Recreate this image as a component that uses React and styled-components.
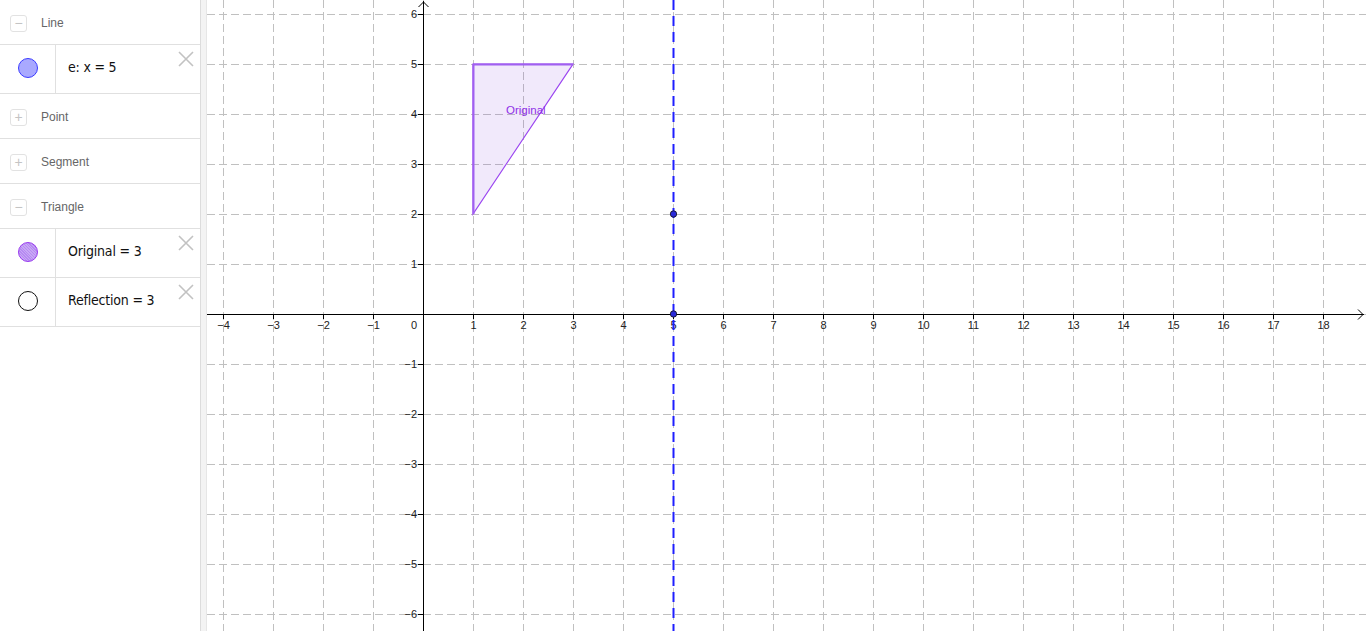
import React from 'react';
import styled, { createGlobalStyle } from 'styled-components';

const Global = createGlobalStyle`
  html, body { margin: 0; padding: 0; background: #fff; overflow: hidden; }
  body { font-family: "Liberation Sans", Arial, sans-serif; }
`;

const Page = styled.div`
  display: flex;
  width: 1366px;
  height: 631px;
  background: #fff;
`;

const AlgebraPanel = styled.div`
  width: 200px;
  flex-shrink: 0;
  display: flex;
  flex-direction: column;
  background: #fff;
`;

const Divider = styled.div`
  width: 5px;
  flex-shrink: 0;
  background: #f3f3f3;
  border-left: 1px solid #dcdcdc;
  border-right: 1px solid #e6e6e6;
`;

const Canvas = styled.div`
  flex: 1;
  position: relative;
  overflow: hidden;
`;

const GroupHeader = styled.div`
  height: 45px;
  box-sizing: border-box;
  padding-top: 2px;
  display: flex;
  align-items: center;
  border-bottom: 1px solid #e0e0e0;
  padding-left: 10px;
  gap: 14px;
  font-size: 12px;
  color: #666;
`;

const Toggle = styled.span`
  width: 15px;
  height: 15px;
  border: 1px solid #e2e2e2;
  border-radius: 3px;
  display: flex;
  align-items: center;
  justify-content: center;
  color: #c4c4c4;
  font-size: 14px;
  line-height: 1;
`;

const ItemRow = styled.div`
  height: 48px;
  display: flex;
  border-bottom: 1px solid #e0e0e0;
  position: relative;
`;

const MarbleCell = styled.div`
  width: 56px;
  flex-shrink: 0;
  display: flex;
  align-items: center;
  justify-content: center;
  border-right: 1px solid #e0e0e0;
  padding-bottom: 2px;
  box-sizing: border-box;
`;

const Marble = styled.span`
  width: 18px;
  height: 18px;
  border-radius: 50%;
  border: 1px solid ${p => p.$stroke};
  background: ${p => p.$fill};
  ${p => p.$hatched && `
    background-image: repeating-linear-gradient(45deg, rgba(255,255,255,0.25) 0 1px, transparent 1px 2px);
  `}
`;

const ItemText = styled.div`
  display: flex;
  align-items: center;
  padding-left: 12px;
  padding-bottom: 5px;
  font-size: 14px;
  color: #111;
  font-family: "DejaVu Sans Condensed", "DejaVu Sans", sans-serif;
  letter-spacing: -0.2px;
  white-space: pre;
`;

const Close = styled.svg`
  position: absolute;
  right: 6px;
  top: 6px;
`;

const CloseIcon = () => (
  <Close width="16" height="16" viewBox="0 0 16 16">
    <path d="M1 1 L15 15 M15 1 L1 15" stroke="#c2c2c2" strokeWidth="1.6" />
  </Close>
);

const groups = [
  { name: 'Line', open: true, items: [{ text: 'e: x = 5', fill: '#a9a9ff', stroke: '#3b3bff' }] },
  { name: 'Point', open: false, items: [] },
  { name: 'Segment', open: false, items: [] },
  {
    name: 'Triangle',
    open: true,
    items: [
      { text: 'Original = 3', fill: '#b68af2', stroke: '#9a3cf0', hatched: true },
      { text: 'Reflection = 3', fill: '#fff', stroke: '#111' },
    ],
  },
];

// graph geometry (svg coords)
const W = 1159;
const H = 631;
const OX = 216;
const OY = 314;
const U = 50;
const px = x => OX + x * U;
const py = y => OY - y * U;

const xs = [];
for (let k = -4; k <= 18; k++) xs.push(k);
const ys = [];
for (let k = -6; k <= 6; k++) ys.push(k);

const label = k => (k < 0 ? '\u2212' + Math.abs(k) : String(k));

const Graph = () => (
  <svg width={W} height={H} style={{ display: 'block' }}>
    <g stroke="#c0c0c0" strokeWidth="1" strokeDasharray="8 4">
      {xs.map(k => (
        <line key={'v' + k} x1={px(k) + 0.5} y1="0" x2={px(k) + 0.5} y2={H} />
      ))}
      {ys.map(k => (
        <line key={'h' + k} x1="0" y1={py(k) + 0.5} x2={W} y2={py(k) + 0.5} />
      ))}
    </g>
    <polygon
      points={`${px(1)},${py(5)} ${px(3)},${py(5)} ${px(1)},${py(2)}`}
      fill="rgba(140,70,220,0.12)"
      stroke="#9a44f0"
      strokeWidth="1.2"
    />
    <line x1={px(1) + 0.5} y1={py(5)} x2={px(1) + 0.5} y2={py(2)} stroke="#a060f0" strokeWidth="2" />
    <line x1={px(1)} y1={py(5) + 0.5} x2={px(3)} y2={py(5) + 0.5} stroke="#a060f0" strokeWidth="2" />
    <text x={px(1) + 33} y={py(4) + 0} fontSize="11.5" fill="#8f2fe8" fontFamily="Liberation Sans, Arial, sans-serif">
      Original
    </text>
    <g stroke="#000" strokeWidth="1" fill="none">
      <line x1="0" y1={OY + 0.5} x2={W - 2} y2={OY + 0.5} />
      <line x1={OX + 0.5} y1={H} x2={OX + 0.5} y2="1" />
      <polyline points={`${W - 8},${OY - 4.5} ${W - 3},${OY + 0.5} ${W - 8},${OY + 5.5}`} />
      <polyline points={`${OX - 4.5},${7} ${OX + 0.5},${2} ${OX + 5.5},${7}`} />
      {xs.filter(k => k !== 0).map(k => (
        <line key={'tx' + k} x1={px(k) + 0.5} y1={OY + 1} x2={px(k) + 0.5} y2={OY + 5} />
      ))}
      {ys.filter(k => k !== 0).map(k => (
        <line key={'ty' + k} x1={OX - 5} y1={py(k) + 0.5} x2={OX} y2={py(k) + 0.5} />
      ))}
    </g>
    <g fontSize="11" fill="#222" fontFamily="Liberation Sans, Arial, sans-serif">
      {xs.filter(k => k !== 0).map(k => (
        <text key={'lx' + k} x={px(k) + 0.5} y={OY + 15} textAnchor="middle">
          {label(k)}
        </text>
      ))}
      {ys.filter(k => k !== 0).map(k => (
        <text key={'ly' + k} x={OX - 6} y={py(k) + 4} textAnchor="end">
          {label(k)}
        </text>
      ))}
      <text x={OX - 6} y={OY + 15} textAnchor="end">0</text>
    </g>
    <line x1={px(5) + 0.5} y1="0" x2={px(5) + 0.5} y2={H} stroke="#1e1eff" strokeWidth="2" strokeDasharray="10 6" />
    <circle cx={px(5) + 0.5} cy={py(2)} r="3.2" fill="#2a2ad8" stroke="#111" strokeWidth="0.8" />
    <circle cx={px(5) + 0.5} cy={py(0)} r="3.2" fill="#2a2ad8" stroke="#111" strokeWidth="0.8" />
  </svg>
);

export default function App() {
  return (
    <Page>
      <Global />
      <AlgebraPanel>
        {groups.map(g => (
          <React.Fragment key={g.name}>
            <GroupHeader>
              <Toggle>{g.open ? '\u2212' : '+'}</Toggle>
              {g.name}
            </GroupHeader>
            {g.items.map(it => (
              <ItemRow key={it.text}>
                <MarbleCell>
                  <Marble $fill={it.fill} $stroke={it.stroke} $hatched={it.hatched} />
                </MarbleCell>
                <ItemText>{it.text}</ItemText>
                <CloseIcon />
              </ItemRow>
            ))}
          </React.Fragment>
        ))}
      </AlgebraPanel>
      <Divider />
      <Canvas>
        <Graph />
      </Canvas>
    </Page>
  );
}
